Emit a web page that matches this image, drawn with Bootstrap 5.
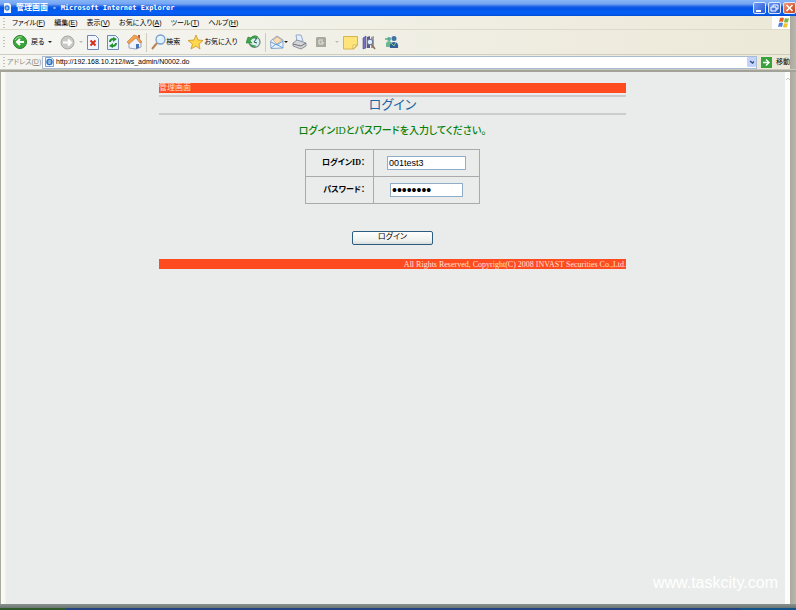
<!DOCTYPE html>
<html lang="ja">
<head>
<meta charset="utf-8">
<meta name="viewport" content="width=device-width, initial-scale=1">
<title>管理画面 - Microsoft Internet Explorer</title>
<link href="https://cdn.jsdelivr.net/npm/bootstrap@5.3.0/dist/css/bootstrap.min.css" rel="stylesheet">
<style>
body{font-family:"Liberation Sans","Noto Sans CJK JP",sans-serif;font-feature-settings:"palt";font-size:8px;line-height:12px;color:#000;background:#eaeceb}
button,input{font:inherit;color:inherit}
.titlebar{height:16px;background:linear-gradient(#85b4f7 0,#75a5f2 4px,#2e6fe8 6px,#0553e4 8px,#0560f5 12px,#0458ec 15px,#0347c4);color:#fff;line-height:16px}
.caption-text{font-family:"DejaVu Sans Mono","Noto Sans CJK JP",monospace;font-weight:700;font-size:7px}
.caption-ja{font-size:8px}
.winbtn{width:13px;height:12px;padding:0;border:1px solid #dce8fd;border-radius:2px;background:linear-gradient(135deg,#6f9bf4,#2455cf);display:flex}
.winbtn-close{background:linear-gradient(135deg,#f09a7d,#c93c14)}
.winbtns{gap:2px}
.bars{background:linear-gradient(90deg,#f5f5f2,#ece9d8)}
.menubar{height:14px;border-bottom:1px solid #dddacb}
.menulist{gap:9px;padding-left:7px}
.plain{border:0;background:none;padding:0;white-space:nowrap;line-height:12px;font-size:7px}
.grip{width:2px;height:10px;background:repeating-linear-gradient(#c5c2b4 0 1px,transparent 1px 3px);margin-left:3px}
.toolbar{height:25px;border-bottom:1px solid #d0cebf}
.toolbar svg{display:block;flex:none}
.sep{width:1px;height:19px;background:#cfccbd}
.caret{width:0;height:0;border:2px solid transparent;border-top-color:#222;border-bottom:0}
.caret-off{border-top-color:#bbb}
.address{height:14px}
.address label{color:#8d8b80;font-size:7px;width:35px;margin-left:2px;white-space:nowrap}
.urlbox{height:13px;background:#fff;border:1px solid #a9bbd0}
.urlbox svg{margin:0 2px}
.urlbox input{border:0;outline:0;padding:0;background:transparent;height:11px;font-size:7px}
.drop{width:9px;height:10px;padding:0;border:0;border-radius:1px;background:#c3d3fb;display:flex;align-items:center;justify-content:center}
.rule-dark{height:3px;background:linear-gradient(#c9c8bf 0 1px,#a3a298 1px)}
.frame-left{width:6px;background:linear-gradient(90deg,#aaa99f 0 1px,#fbfbf6 1px 3px,#f0f0ec)}
.scroll-col{width:5px;background:#fdfdfb}
.edge{width:6px;background:linear-gradient(90deg,#aaa99f,#bab8ac)}
.viewport-area{padding:11px 159px 0 153px}
.strip{height:10px;background:#ff4b20;color:#ffe3d8;line-height:10px;overflow:hidden;font-size:8px}
.strip-foot{font-family:"Liberation Serif",serif;line-height:12px}
.heading{border-top:2px solid #cbcccb;border-bottom:2px solid #cbcccb;height:20px;margin:2px 0 0;font-size:13px;line-height:15px;font-weight:400;color:#1a66a2}
.prompt{color:#078007;font-size:10px;line-height:14px;margin:9px 0 11px;font-weight:500}
.serif{font-family:"Liberation Serif","Noto Sans CJK JP",serif}
.login{border-collapse:collapse;width:175px}
.login th,.login td{border:1px solid #a9aaa9;height:27px;padding:0}
.login th{width:68px;font-size:8px;text-align:right;padding-right:8px}
.field{display:block;height:14px;border:1px solid #8fadc9;background:#fff;padding:0 1px;margin:auto;line-height:12px;outline:0;font-family:"Liberation Sans",sans-serif}
.field-id{width:79px;font-size:9px}
.field-pw{width:73px;font-size:14px}
.submit{width:81px;height:14px;margin-top:27px;padding:0 0 3px;border:1px solid #2f5d80;border-radius:2px;background:linear-gradient(#fff,#edf0ec 75%,#d5dbdc);font-size:8px;line-height:9px}
.foot-gap{margin-top:14px}
.watermark{right:7px;bottom:12px;color:#fff;font-size:16px;line-height:18px}
.frame-bottom{height:4px;background:linear-gradient(#8b918d,#6b7575)}
.taskbar{height:2px;background:linear-gradient(90deg,#315a2c 0 66px,#244282 66px 93%,#11548a 93%)}
</style>
<script src="https://cdn.jsdelivr.net/npm/bootstrap@5.3.0/dist/js/bootstrap.bundle.min.js"></script>
</head>
<body class="d-flex flex-column vh-100 overflow-hidden">
<header>
  <div class="titlebar d-flex align-items-center">
    <svg class="ms-1" width="8" height="12" viewBox="0 0 8 12" aria-hidden="true"><path d="M0 1h5l2 2v8H0z" fill="#eff5ff"/><circle cx="3" cy="6" r="2" fill="none" stroke="#2b7be0" stroke-width="1.3"/><path d="M1 6h4" stroke="#2b7be0"/></svg>
    <span class="caption-text flex-grow-1 ps-1 text-nowrap"><span class="caption-ja">管理画面</span> - Microsoft Internet Explorer</span>
    <div class="winbtns d-flex">
      <button class="winbtn" aria-label="最小化"><svg width="11" height="10"><path d="M2 8h5" stroke="#fff" stroke-width="2"/></svg></button>
      <button class="winbtn" aria-label="元に戻す"><svg width="11" height="10"><path d="M4 4V2h5v4H7M2 4h5v4H2z" fill="none" stroke="#fff"/></svg></button>
      <button class="winbtn winbtn-close" aria-label="閉じる"><svg width="11" height="10"><path d="M2.500 2l6 6m0-6l-6 6" stroke="#fff" stroke-width="1.500"/></svg></button>
    </div>
  </div>
  <div class="d-flex">
    <div class="bars flex-grow-1">
      <div class="menubar d-flex align-items-center">
        <span class="grip"></span>
        <nav class="menulist d-flex flex-grow-1">
          <button class="plain">ファイル(<u>F</u>)</button><button class="plain">編集(<u>E</u>)</button><button class="plain">表示(<u>V</u>)</button><button class="plain">お気に入り(<u>A</u>)</button><button class="plain">ツール(<u>T</u>)</button><button class="plain">ヘルプ(<u>H</u>)</button>
        </nav>
        <svg width="18" height="13" viewBox="0 0 18 13" aria-hidden="true"><path d="M0 0h18v13H0z" fill="#fff"/><path d="M8 2q2-1 4 0l-1 4q-2-1-4 0z" fill="#e9622c"/><path d="M13 2q2 1 4 0l-1 4q-2 1-4 0z" fill="#7cb83c"/><path d="M7 7q2-1 4 0l-1 4q-2-1-4 0z" fill="#4a82d8"/><path d="M12 7q2 1 4 0l-1 4q-2 1-4 0z" fill="#f3c02f"/></svg>
      </div>
      <div class="toolbar d-flex align-items-center">
        <span class="grip"></span>
        <svg class="ms-2" width="14" height="14" viewBox="0 0 14 14"><circle cx="7" cy="7" r="6.500" fill="#3ba63b" stroke="#2b7d2c"/><path d="M2 5q2-4 7-3" fill="none" stroke="#a5dda0"/><path d="M11 7H4m3-3L4 7l3 3" fill="none" stroke="#fff" stroke-width="2"/></svg>
        <button class="plain ms-1">戻る</button><span class="caret mx-1"></span>
        <svg class="ms-1" width="15" height="15" viewBox="0 0 15 15"><circle cx="7.500" cy="7.500" r="6.500" fill="#c9c9c5" stroke="#a6a6a2"/><path d="M3 7.500h8m-3-3l3 3-3 3" fill="none" stroke="#fff" stroke-width="2"/></svg>
        <span class="caret caret-off mx-1"></span>
        <svg width="12" height="15" viewBox="0 0 12 15"><path d="M.5.5h8l3 3v11H.5z" fill="#f3f6ff" stroke="#7089b4"/><path d="M3.500 5.500l5 5m0-5l-5 5" stroke="#d52f19" stroke-width="2"/></svg>
        <svg class="ms-2" width="12" height="15" viewBox="0 0 12 15"><path d="M.5.5h8l3 3v11H.5z" fill="#e8f1ff" stroke="#7089b4"/><path d="M3 7q0-3 4-3M9 8q0 3-4 3" fill="none" stroke="#25912b" stroke-width="2"/><path d="M6 2l4 2-4 3zM6 8l-4 3 4 2z" fill="#25912b"/></svg>
        <svg class="ms-2" width="15" height="16" viewBox="0 0 15 16"><path d="M2 8v6l7 1 5-2V7L9 3z" fill="#eef4ff" stroke="#98a5bb"/><path d="M0 8l7-7 3 1 5 6-2 1-4-5-7 6z" fill="#f3a250" stroke="#bd7732" stroke-width=".6"/><path d="M9 10h3v4l-3 1z" fill="#4a73b4"/><path d="M11 1h2v4l-2-2z" fill="#bc5c39"/></svg>
        <span class="sep mx-1"></span>
        <svg width="15" height="16" viewBox="0 0 15 16"><path d="M1 15l5-6" stroke="#b88453" stroke-width="2"/><circle cx="9.500" cy="5.500" r="4.500" fill="#d9f1ff" stroke="#7e9dc8" stroke-width="1.300"/><path d="M7 5q1-2 3-2" fill="none" stroke="#fff"/></svg>
        <button class="plain">検索</button>
        <svg class="ms-2" width="16" height="16" viewBox="0 0 16 16"><path d="M8 1l2 5 5 .5-4 3.500 1 5-4-3-5 3 1.500-5L0 6.500 6 6z" fill="#ffd84d" stroke="#c99622" stroke-width=".8"/></svg>
        <button class="plain">お気に入り</button>
        <svg class="ms-2" width="15" height="14" viewBox="0 0 15 14"><circle cx="8.500" cy="7" r="5.500" fill="#d8eef0" stroke="#66877b" stroke-width="1.200"/><path d="M12 2Q8-1 5 3L2 2 0 8l6 0-2-2q3-5 6-2M4 9q2 4 6 2" fill="#3fa747" stroke="#267c30" stroke-width=".6"/><path d="M11 3L8 7l3 1" fill="none" stroke="#245c43"/></svg>
        <span class="sep mx-1"></span>
        <svg width="14" height="14" viewBox="0 0 14 14"><path d="M.5 6L7 1l6 4v8l-12 .5z" fill="#eaf4ff" stroke="#89a5c6"/><path d="M3 5l4-3 5 3-5 4z" fill="#f9dfb7" stroke="#d69a69" stroke-width=".7"/><path d="M1 7l6 3 6-4M1 13l5-4 7 4" fill="none" stroke="#65a0d1"/></svg>
        <span class="caret"></span>
        <svg class="ms-1" width="15" height="16" viewBox="0 0 15 16"><path d="M4 1h5l2 6-6 1z" fill="#e2f0ff" stroke="#96a9c9"/><path d="M1 9l4-3 9 3v3l-5 3-8-3z" fill="#d4d5d8" stroke="#8e9299"/><path d="M1 10l8 2 5-3" fill="none" stroke="#6f747e"/></svg>
        <svg class="ms-2" width="12" height="12" viewBox="0 0 12 12"><path d="M2 1h8l1 1v9H1V2z" fill="#aaa9a0"/><path d="M8 4H4v4h4V6H6" fill="none" stroke="#e7e6dc"/></svg>
        <span class="caret caret-off ms-2 me-1"></span>
        <svg width="15" height="15" viewBox="0 0 15 15"><path d="M.5 1.500h14v9l-4 3.500H.5z" fill="#ffe579" stroke="#d7b353"/><path d="M10 14v-4h4z" fill="#fff5bd" stroke="#c49d3f" stroke-width=".6"/></svg>
        <svg class="ms-1" width="14" height="15" viewBox="0 0 14 15"><path d="M1 3l3-2v12l-3 1z" fill="#7770c2" stroke="#4b478e" stroke-width=".6"/><path d="M5 2l3-1v12H5z" fill="#615797"/><path d="M9 2l3-1v12H9z" fill="#a39aa8"/><circle cx="8" cy="7" r="2.800" fill="#e0efff" stroke="#626b86"/><path d="M10 10l3 4" stroke="#937154" stroke-width="1.500"/></svg>
        <svg class="ms-2" width="15" height="14" viewBox="0 0 15 14"><circle cx="5" cy="4" r="2" fill="#52a89b"/><circle cx="10" cy="3.500" r="2.500" fill="#4271a8"/><path d="M2 12V8q3-4 6 0v4z" fill="#69b98c"/><path d="M6 13q-1-6 4-6t4 6z" fill="#345f96"/><circle cx="2" cy="4" r="1" fill="#5bae85"/><path d="M7 8l3 3 2-4" stroke="#81c69d" fill="none"/></svg>
      </div>
      <div class="address d-flex align-items-center">
        <span class="grip"></span>
        <label for="url">アドレス(<u>D</u>)</label>
        <div class="urlbox d-flex align-items-center flex-grow-1">
          <svg width="9" height="10" viewBox="0 0 9 10" aria-hidden="true"><path d="M.5.5H6l2.500 2v7h-8z" fill="#eef6ff" stroke="#7a9cc8"/><circle cx="4.500" cy="5" r="2.500" fill="none" stroke="#2870c5" stroke-width="1.400"/><path d="M2 5h5" stroke="#2870c5"/></svg>
          <input id="url" class="flex-grow-1" value="http://192.168.10.212/iws_admin/N0002.do">
          <button class="drop" aria-label="履歴"><svg width="7" height="6"><path d="M1 2l2.500 2L6 2" fill="none" stroke="#35507f" stroke-width="1.500"/></svg></button>
        </div>
        <svg class="ms-1" width="11" height="11" viewBox="0 0 11 11" aria-hidden="true"><path d="M0 0h11v11H0z" fill="#38a33b"/><path d="M2 5.500h6m-3-3l3 3-3 3" fill="none" stroke="#fff" stroke-width="1.500"/></svg>
        <button class="plain ms-1">移動</button>
      </div>
    </div>
    <div class="edge"></div>
  </div>
  <div class="rule-dark"></div>
</header>
<div class="d-flex flex-grow-1">
  <div class="frame-left"></div>
  <main class="viewport-area flex-grow-1 position-relative">
    <div class="strip">管理画面</div>
    <h1 class="heading text-center">ログイン</h1>
    <p class="prompt serif text-center">ログインIDとパスワードを入力してください。</p>
    <form class="text-center" onsubmit="return false">
      <table class="login serif mx-auto">
        <tr><th><label for="uid">ログインID：</label></th><td><input id="uid" class="field field-id" value="001test3"></td></tr>
        <tr><th><label for="pwd">パスワード：</label></th><td><input id="pwd" class="field field-pw" type="password" value="password"></td></tr>
      </table>
      <button class="submit" type="submit">ログイン</button>
    </form>
    <footer class="strip strip-foot foot-gap text-end">All Rights Reserved, Copyright(C) 2008 INVAST Securities Co.,Ltd.</footer>
    <div class="watermark position-absolute">www.taskcity.com</div>
  </main>
  <div class="scroll-col"><svg width="5" height="10" aria-hidden="true"><path d="M1 7l2-2 2 2" fill="none" stroke="#c5c5be"/></svg></div>
  <div class="edge"></div>
</div>
<div class="frame-bottom"></div>
<div class="taskbar"></div>
</body>
</html>
